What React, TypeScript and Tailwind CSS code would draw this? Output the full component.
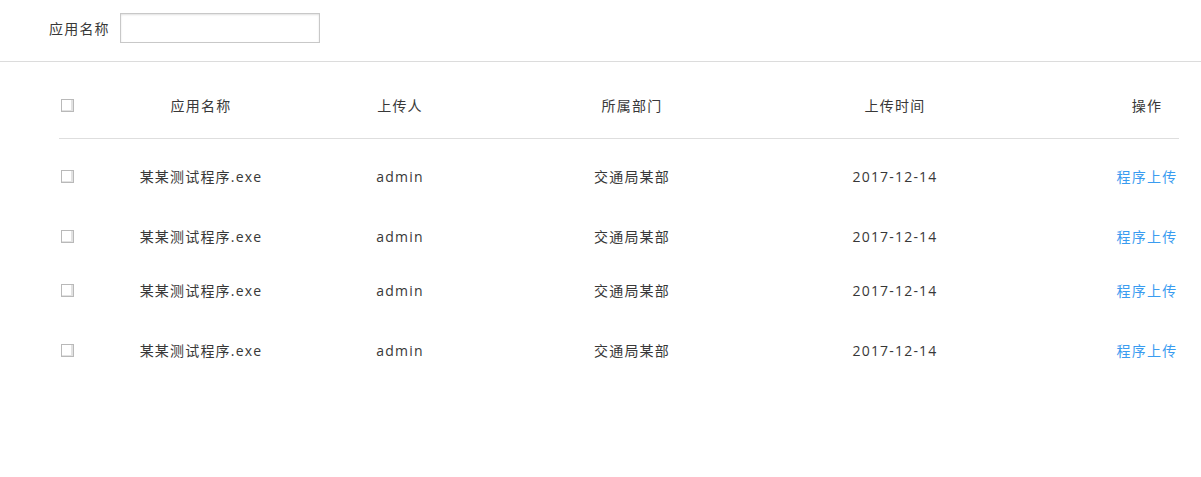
import React from "react";

type Row = { name: string; user: string; dept: string; time: string; h: string };

const rows: Row[] = [
  { name: "某某测试程序.exe", user: "admin", dept: "交通局某部", time: "2017-12-14", h: "h-[74px]" },
  { name: "某某测试程序.exe", user: "admin", dept: "交通局某部", time: "2017-12-14", h: "h-[46px]" },
  { name: "某某测试程序.exe", user: "admin", dept: "交通局某部", time: "2017-12-14", h: "h-[62px]" },
  { name: "某某测试程序.exe", user: "admin", dept: "交通局某部", time: "2017-12-14", h: "h-[58px]" },
];

function Check() {
  return (
    <span className="block w-[13px] h-[13px] ml-[2px] mt-[1px] border border-[#b9b9b9] bg-white shadow-[inset_-2px_-1px_0_#e2e2e2]" />
  );
}

const cols = "grid grid-cols-[30px_224px_174px_290px_236px_1fr] items-center";

export default function App() {
  return (
    <div className="w-[1201px] h-[477px] bg-white text-[14px] text-[#383838] tracking-[1.2px] font-['Open_Sans','Noto_Sans_CJK_SC',sans-serif]">
      <div className="h-[62px] border-b border-[#dcdcdc] pt-[13px] pl-[49px]">
        <div className="flex items-center gap-[10px]">
          <span>应用名称</span>
          <input className="w-[200px] h-[30px] border border-[#c8c8c8] shadow-[inset_0_1px_2px_rgba(0,0,0,0.12)] outline-none px-2" />
        </div>
      </div>

      <div className="ml-[59px] w-[1120px]">
        <div className={`${cols} h-[77px] pt-[10px] border-b border-[#dedede]`}>
          <Check />
          <div className="text-center">应用名称</div>
          <div className="text-center">上传人</div>
          <div className="text-center">所属部门</div>
          <div className="text-center">上传时间</div>
          <div className="flex justify-end">
            <span className="w-16 text-center">操作</span>
          </div>
        </div>
        {rows.map((r, i) => (
          <div key={i} className={`${cols} ${r.h}`}>
            <Check />
            <div className="text-center">{r.name}</div>
            <div className="text-center">{r.user}</div>
            <div className="text-center">{r.dept}</div>
            <div className="text-center">{r.time}</div>
            <div className="flex justify-end">
              <a className="w-16 text-center text-[#3a9cf0] cursor-pointer">程序上传</a>
            </div>
          </div>
        ))}
      </div>
    </div>
  );
}
